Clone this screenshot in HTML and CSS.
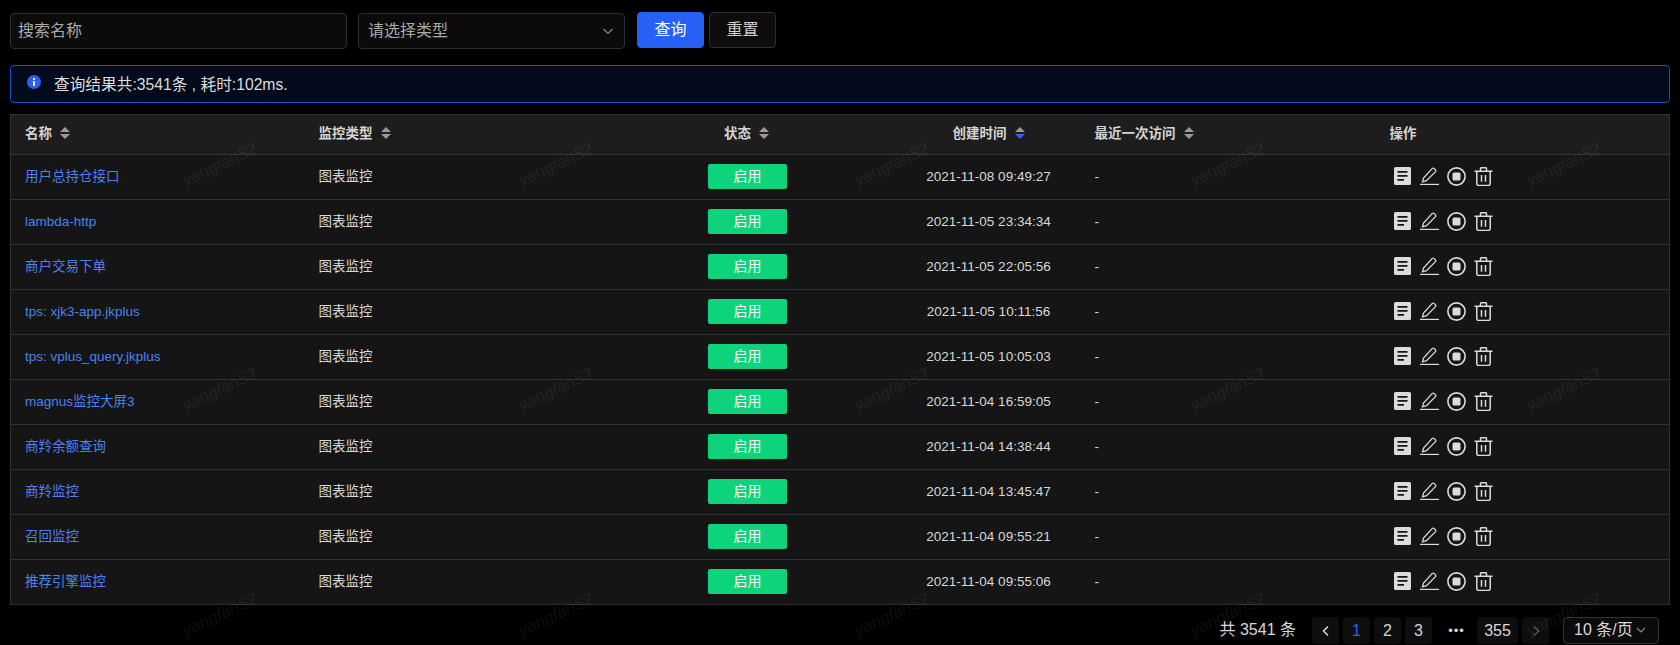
FILE: index.html
```html
<!DOCTYPE html>
<html lang="zh-CN">
<head>
  <meta charset="UTF-8">
  <title>监控列表</title>
  <link rel="stylesheet" href="styles.css">
</head>
<body>
  <svg class="defs" width="0" height="0">
    <symbol id="i-doc" viewBox="0 0 17 18"><path fill="#dcdcdc" fill-rule="evenodd" d="M1.500 0h14A1.500 1.500 0 0 1 17 1.500v15a1.500 1.500 0 0 1-1.500 1.500h-14A1.500 1.500 0 0 1 0 16.500v-15A1.500 1.500 0 0 1 1.500 0zM3.500 4v1.800h10V4zm0 4v1.800h10V8zm0 4v1.800h6.500V12z"/></symbol>
    <symbol id="i-edit" viewBox="0 0 19 18"><path fill="none" stroke="#dcdcdc" stroke-width="1.300" d="M2.500 14.800l1-3.800L12.300 1.400a1.200 1.200 0 0 1 1.700 0l1.500 1.500a1.200 1.200 0 0 1 0 1.700L6.500 13.700z"/><path fill="none" stroke="#dcdcdc" stroke-width="1.200" d="M0 17.400h19"/></symbol>
    <symbol id="i-stop" viewBox="0 0 19 19"><circle cx="9.500" cy="9.500" r="8.600" fill="none" stroke="#dcdcdc" stroke-width="1.600"/><rect x="5.500" y="5.500" width="8" height="8" rx="1.500" fill="#dcdcdc"/></symbol>
    <symbol id="i-trash" viewBox="0 0 19 19"><path fill="none" stroke="#dcdcdc" stroke-width="1.500" d="M.5 4.300h18M2.800 4.300v12.200a2 2 0 0 0 2 2h9.400a2 2 0 0 0 2-2V4.300M6.500 4.300V1.700a1 1 0 0 1 1-1h4a1 1 0 0 1 1 1v2.600M7.500 8v6.800M11.500 8v6.800"/></symbol>
  </svg>

  <form class="search-bar">
    <div class="field field-name">搜索名称</div>
    <div class="field field-type">
      <span>请选择类型</span>
      <svg class="chevron" width="12" height="12" viewBox="0 0 12 12"><path d="M1.500 4l4.500 4.500L10.500 4" fill="none" stroke="#8a8a8a" stroke-width="1.200"/></svg>
    </div>
    <button type="button" class="btn btn-primary">查询</button>
    <button type="button" class="btn">重置</button>
  </form>

  <div class="alert">
    <svg class="alert-icon" width="14" height="14" viewBox="0 0 14 14"><circle cx="7" cy="7" r="7" fill="#2b5ff0"/><rect x="6" y="6" width="2" height="5" fill="#e8eeff"/><rect x="6" y="3" width="2" height="2" fill="#e8eeff"/></svg>
    <span>查询结果共:3541条 , 耗时:102ms.</span>
  </div>

  <table class="monitor-table">
    <colgroup>
      <col class="c-name"><col class="c-type"><col class="c-status"><col class="c-time"><col class="c-last"><col class="c-ops">
    </colgroup>
    <thead>
      <tr>
        <th>名称<i class="sort"></i></th>
        <th>监控类型<i class="sort"></i></th>
        <th class="center">状态<i class="sort"></i></th>
        <th class="center">创建时间<i class="sort sort-desc"></i></th>
        <th>最近一次访问<i class="sort"></i></th>
        <th>操作</th>
      </tr>
    </thead>
    <tbody id="rows"></tbody>
  </table>

  <div class="pager">
    <span class="total">共 3541 条</span>
    <span class="page page-nav"><svg width="10" height="12" viewBox="0 0 10 12"><path d="M7 1.500L2.500 6 7 10.500" fill="none" stroke="#d8d8d8" stroke-width="1.500"/></svg></span>
    <span class="page page-on">1</span>
    <span class="page">2</span>
    <span class="page">3</span>
    <span class="dots">•••</span>
    <span class="page page-wide">355</span>
    <span class="page page-nav"><svg width="10" height="12" viewBox="0 0 10 12"><path d="M3 1.500L7.500 6 3 10.500" fill="none" stroke="#555" stroke-width="1.500"/></svg></span>
    <span class="page-size">10 条/页<svg width="10" height="10" viewBox="0 0 10 10"><path d="M1 3l4 4 4-4" fill="none" stroke="#8a8a8a" stroke-width="1.100"/></svg></span>
  </div>

  <div class="watermarks" id="marks"></div>

  <script src="app.js"></script>
</body>
</html>
```

FILE: styles.css
```css
* {
  box-sizing: border-box;
}
html, body {
  margin: 0;
  height: 645px;
  overflow: hidden;
  background-color: #000;
}
body {
  position: relative;
  padding: 12px 10px 0 10px;
  font-family: "Liberation Sans", "Noto Sans CJK SC", sans-serif;
  font-size: 13.5px;
  line-height: 20px;
  color: #dcdcdc;
}
.defs {
  position: absolute;
}

/* search row */
.search-bar {
  display: flex;
  align-items: flex-start;
  height: 37px;
  margin: 0;
}
.field {
  display: flex;
  align-items: center;
  height: 36px;
  margin-top: 1px;
  background-color: #0b0b0b;
  border: 1px solid #2f2f2f;
  border-radius: 4px;
  font-size: 16px;
  color: #aaa;
}
.field-name {
  width: 337px;
  padding-left: 7px;
  margin-right: 11px;
}
.field-type {
  width: 267px;
  padding-left: 9px;
  padding-right: 10px;
  margin-right: 12px;
  justify-content: space-between;
}
.btn {
  width: 67px;
  height: 36px;
  margin-right: 5px;
  padding: 0;
  background-color: #0d0d0d;
  border: 1px solid #2f2f2f;
  border-radius: 4px;
  font: inherit;
  font-size: 16px;
  color: #d0d0d0;
}
.btn-primary {
  background-color: #2660f5;
  border-color: #2660f5;
  color: #fff;
}

/* result line */
.alert {
  display: flex;
  align-items: center;
  height: 38px;
  margin-top: 16px;
  padding: 1px 0 0 16px;
  background-color: #030a1c;
  border: 1px solid #1d4ecb;
  border-radius: 4px;
  font-size: 15.7px;
  color: #dcdcdc;
}
.alert-icon {
  margin-right: 13px;
  margin-top: -5px;
}

/* table */
.monitor-table {
  width: 100%;
  margin-top: 11px;
  border-collapse: collapse;
  table-layout: fixed;
  border: 1px solid #333;
}
.c-name { width: 294px; }
.c-type { width: 292px; }
.c-status { width: 300px; }
.c-time { width: 184px; }
.c-last { width: 295px; }
.monitor-table th {
  height: 40px;
  padding: 0 14px 2px;
  background-color: #1d1d1d;
  border-bottom: 1px solid #333;
  font-weight: 700;
  text-align: left;
  color: #d4d4d4;
}
.monitor-table td {
  height: 45px;
  padding: 0 14px;
  background-color: #151515;
  border-bottom: 1px solid #303030;
  color: #d8d8d8;
}
.monitor-table .center {
  text-align: center;
}
.sort {
  position: relative;
  display: inline-block;
  width: 10px;
  height: 12px;
  margin-left: 8px;
  vertical-align: -1px;
}
.sort::before, .sort::after {
  content: "";
  position: absolute;
  left: 0;
  border-left: 5px solid transparent;
  border-right: 5px solid transparent;
}
.sort::before {
  top: 0;
  border-bottom: 5px solid #999;
}
.sort::after {
  bottom: 0;
  border-top: 5px solid #999;
}
.sort-desc::after {
  border-top-color: #2b63f5;
}
.name-link {
  color: #4b82f0;
}
.tag {
  display: block;
  width: 79px;
  height: 25px;
  margin: -2px auto 0;
  font-size: 14px;
  line-height: 25px;
  background-color: #0dd37a;
  border-radius: 2px;
  text-align: center;
  color: #fff;
  transform: translateX(1px);
}
.ops {
  display: flex;
  align-items: center;
  margin-top: -2px;
  padding-left: 4px;
}
.ops svg {
  display: block;
}
.ops .i-doc { width: 17px; height: 18px; margin-right: 9px; }
.ops .i-edit { width: 19px; height: 18px; margin-right: 8px; }
.ops .i-stop { width: 19px; height: 19px; margin-right: 8px; }
.ops .i-trash { width: 19px; height: 19px; }

/* pager */
.pager {
  display: flex;
  align-items: center;
  justify-content: flex-end;
  height: 27px;
  margin-top: 12px;
  padding-right: 11px;
  font-size: 16px;
  color: #d8d8d8;
}
.total {
  margin-right: 16px;
  padding-bottom: 2px;
}
.page {
  display: flex;
  align-items: center;
  justify-content: center;
  width: 27px;
  height: 27px;
  margin-right: 4px;
  background-color: #0e0e0e;
  border-radius: 4px;
}
.page-on {
  color: #2b63f5;
}
.page-wide {
  width: 41px;
}
.dots {
  width: 41px;
  text-align: center;
  font-size: 13px;
  letter-spacing: 1px;
}
.page-size {
  display: flex;
  align-items: center;
  justify-content: space-between;
  width: 96px;
  height: 27px;
  margin-left: 10px;
  padding: 0 12px 2px 10px;
  background-color: #0b0b0b;
  border: 1px solid #333;
  border-radius: 4px;
}

/* watermark over everything */
.watermarks {
  position: absolute;
  top: 0;
  left: 0;
  width: 1680px;
  height: 645px;
  overflow: hidden;
  pointer-events: none;
}
.mark {
  position: absolute;
  font-size: 17px;
  font-style: italic;
  color: rgba(255, 255, 255, 0.07);
  transform: rotate(-25deg);
  white-space: nowrap;
}
```

FILE: app.js
```js
const rows = [
  ['用户总持仓接口', '2021-11-08 09:49:27'],
  ['lambda-http', '2021-11-05 23:34:34'],
  ['商户交易下单', '2021-11-05 22:05:56'],
  ['tps: xjk3-app.jkplus', '2021-11-05 10:11:56'],
  ['tps: vplus_query.jkplus', '2021-11-05 10:05:03'],
  ['magnus监控大屏3', '2021-11-04 16:59:05'],
  ['商羚余额查询', '2021-11-04 14:38:44'],
  ['商羚监控', '2021-11-04 13:45:47'],
  ['召回监控', '2021-11-04 09:55:21'],
  ['推荐引擎监控', '2021-11-04 09:55:06']
];

const icons = ['doc', 'edit', 'stop', 'trash']
  .map(n => `<svg class="i-${n}"><use href="#i-${n}"></use></svg>`)
  .join('');

document.getElementById('rows').innerHTML = rows.map(r => `
  <tr>
    <td><span class="name-link">${r[0]}</span></td>
    <td>图表监控</td>
    <td class="center"><span class="tag">启用</span></td>
    <td class="center">${r[1]}</td>
    <td>-</td>
    <td><div class="ops">${icons}</div></td>
  </tr>`).join('');

// watermark grid
const marks = document.getElementById('marks');
for (let y = 0; y < 3; y++) {
  for (let x = 0; x < 5; x++) {
    const m = document.createElement('span');
    m.className = 'mark';
    m.textContent = 'yangfan52';
    m.style.left = (180 + x * 336) + 'px';
    m.style.top = (155 + y * 225) + 'px';
    marks.appendChild(m);
  }
}
```
